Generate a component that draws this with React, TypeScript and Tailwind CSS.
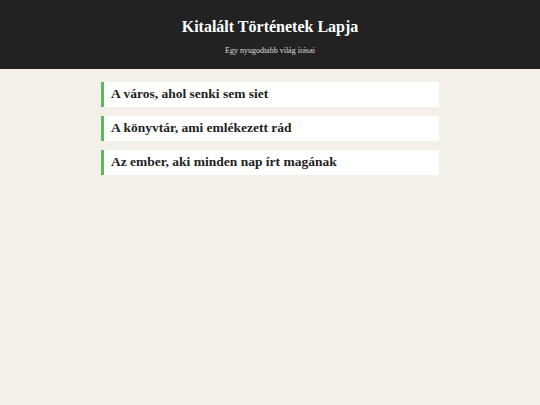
const stories = [
  'A város, ahol senki sem siet',
  'A könyvtár, ami emlékezett rád',
  'Az ember, aki minden nap írt magának',
]

const App = () => {
  return (
    <div className="min-h-[405px] bg-[#f3f0e9] font-['Liberation_Serif',Georgia,serif]">
      <header className="bg-[#222222] h-[69px] flex flex-col items-center pt-[16px] text-white">
        <h1 className="text-[16px] font-bold leading-[22px]">Kitalált Történetek Lapja</h1>
        <p className="text-[8px] mt-[7px] text-[#dddddd]">Egy nyugodtabb világ írásai</p>
      </header>
      <main className="w-[338px] mx-auto mt-[13px] flex flex-col gap-[9px]">
        {stories.map((title) => (
          <div
            key={title}
            className="bg-white border-l-[3px] border-[#5cb85c] h-[25px] flex items-center pl-[7px]"
          >
            <h2 className="text-[13.5px] font-bold text-[#222222]">{title}</h2>
          </div>
        ))}
      </main>
    </div>
  )
}

export default App
